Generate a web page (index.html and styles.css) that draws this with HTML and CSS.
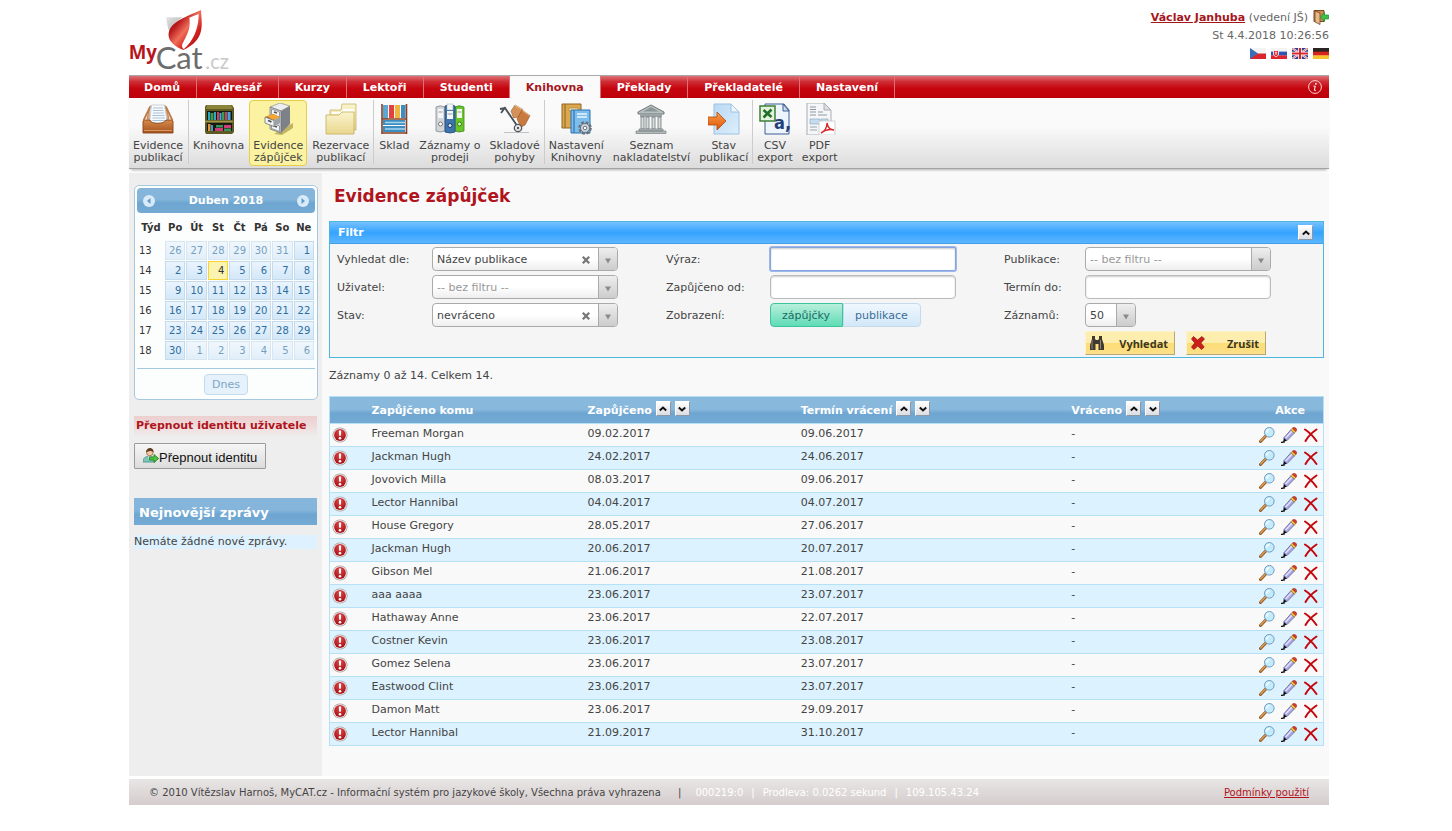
FILE: index.html
```html
<!DOCTYPE html>
<html lang="cs">
<head>
<meta charset="utf-8">
<title>MyCat.cz – Evidence zápůjček</title>
<link rel="stylesheet" href="styles.css">
</head>
<body>
<svg class="defs" aria-hidden="true">
  <defs>
    <linearGradient id="gRed" x1="0" y1="0" x2="1" y2="1"><stop offset="0" stop-color="#8e1214"/><stop offset=".3" stop-color="#b8191a"/><stop offset=".5" stop-color="#f0705c"/><stop offset=".7" stop-color="#d3201f"/><stop offset="1" stop-color="#8a0d12"/></linearGradient>
    <linearGradient id="gGrey" x1="0" y1="0" x2="1" y2="1"><stop offset="0" stop-color="#e4e4e4"/><stop offset="1" stop-color="#a8a8a8"/></linearGradient>
    <linearGradient id="gWood" x1="0" y1="0" x2="0" y2="1"><stop offset="0" stop-color="#d88a4c"/><stop offset="1" stop-color="#a3521c"/></linearGradient>
    <linearGradient id="gFolder" x1="0" y1="0" x2="0" y2="1"><stop offset="0" stop-color="#fbf4cf"/><stop offset="1" stop-color="#e9d68e"/></linearGradient>
    <linearGradient id="gSheet" x1="0" y1="0" x2="1" y2="1"><stop offset="0" stop-color="#b9d9f3"/><stop offset="1" stop-color="#dceefb"/></linearGradient>
    <linearGradient id="gOrange" x1="0" y1="0" x2="0" y2="1"><stop offset="0" stop-color="#fba04e"/><stop offset="1" stop-color="#dd5408"/></linearGradient>
    <radialGradient id="gAlert" cx=".5" cy=".3" r=".7"><stop offset="0" stop-color="#e04a4a"/><stop offset="1" stop-color="#a30d14"/></radialGradient>
  </defs>
  <symbol id="i-alert" viewBox="0 0 16 16"><circle cx="8" cy="8" r="7.6" fill="#a8a0a0"/><circle cx="8" cy="8" r="6.8" fill="#f4eeee"/><circle cx="8" cy="8" r="5.9" fill="url(#gAlert)"/><path d="M6.800 3.600h2.400l-.4 5.200H7.200z" fill="#fff"/><circle cx="8" cy="11.200" r="1.300" fill="#fff"/></symbol>
  <symbol id="i-view" viewBox="0 0 16 16"><path d="M1.5 14.5 6.5 9.2" stroke="#8b5a26" stroke-width="3" stroke-linecap="round"/><path d="M1.7 14 6.2 9.3" stroke="#e59a4e" stroke-width="1.4" stroke-linecap="round"/><circle cx="10.3" cy="5.3" r="4.8" fill="#c4ebfb" stroke="#6c9cc4"/><path d="M7.7 5.5c0-2 1.3-2.9 2.8-2.9" stroke="#fff" stroke-width="1.4" fill="none"/></symbol>
  <symbol id="i-edit" viewBox="0 0 16 16"><path d="M0 15.400c2 0 2-.6 4-.6" stroke="#111" stroke-width="1.300" fill="none"/><path d="m2.200 15 .6-4.200 3.400 2.800z" fill="#111"/><path d="M2.800 10.800 9.800 2.900l3.500 3.200-7.300 7.500z" fill="#a9a7e6" stroke="#55537e" stroke-width=".7"/><path d="m4.600 11 6.600-7" stroke="#e4e3ff" stroke-width="1.300"/><path d="m9.800 2.900 1.600-1.700 3.500 3.200-1.600 1.700z" fill="#f0c23c" stroke="#8a6a1c" stroke-width=".6"/><path d="m11.400 1.200 1-.8c1.300-.8 4 1.600 3.300 3l-.8 1z" fill="#d93a2e" stroke="#8c1f16" stroke-width=".5"/></symbol>
  <symbol id="i-del" viewBox="0 0 16 16"><path d="M2 2.500C6 5 10 9 13.500 14M13.500 2.500C9 5.500 5 9.500 2.500 14" stroke="#c3070c" stroke-width="2" fill="none" stroke-linecap="round"/></symbol>
  <symbol id="i-up" viewBox="0 0 10 10"><path d="m1.800 6.500 3.200-3 3.200 3" fill="none" stroke="#111" stroke-width="2"/></symbol>
  <symbol id="i-down" viewBox="0 0 10 10"><path d="m1.800 3.500 3.200 3 3.200-3" fill="none" stroke="#111" stroke-width="2"/></symbol>
  <symbol id="i-tri" viewBox="0 0 8 8"><path d="M1 1.500h6L4 6.500z" fill="#8a8a8a"/></symbol>
  <symbol id="i-x" viewBox="0 0 10 10"><path d="m1.800 1.800 6.400 6.400m0-6.400L1.800 8.200" stroke="#777" stroke-width="2.300"/></symbol>
</svg>
<div class="page">
  <header class="top">
    <a class="logo" href="#" aria-label="MyCat.cz">
      <svg width="104" height="63" viewBox="27 27 312 189">
        <path d="M139 52h48c-20 14-32 28-38 46-6-16-9-30-10-46z" fill="url(#gGrey)"/>
        <path d="M243 30C245 75 258 118 190 150 142 130 140 103 152 83 165 62 198 50 243 30z" fill="url(#gRed)"/>
        <path d="M236 42C236 82 222 122 191 148 186 143 185 138 187 132 198 108 214 88 208 53 218 49 227 46 236 42z" fill="#fff"/>
        <text x="26" y="178" class="logo-my">My</text>
        <text x="107" y="208" class="logo-cat">Cat</text>
        <text x="256" y="208" class="logo-cz">.cz</text>
      </svg>
    </a>
    <div class="user">
      <div class="user-line"><span><a href="#">Václav Janhuba</a> (vedení JŠ)</span>
        <button class="bare" type="button" aria-label="Odhlásit">
          <svg width="16" height="16" viewBox="0 0 16 16"><path d="M1 1.500h10v11H1z" fill="#c98b55" stroke="#7b4a22"/><path d="m2 2 5 2v11.500L2 13z" fill="#e5b98a" stroke="#7b4a22" stroke-width=".8"/><path d="M15.500 6h-4V3.500L7.500 8l4 4.500V10h4z" fill="#3fc04b" stroke="#1c8a2c" stroke-width=".7"/></svg>
        </button>
      </div>
      <div>St 4.4.2018 10:26:56</div>
      <div class="flags">
        <a href="#" aria-label="Čeština"><svg width="16" height="11" viewBox="0 0 16 11"><path fill="#f4f4f4" d="M0 0h16v6H0z"/><path fill="#d8262c" d="M0 5.500h16V11H0z"/><path fill="#3a6db5" d="m0 0 8 5.500L0 11z"/></svg></a>
        <a href="#" aria-label="Slovenčina"><svg width="16" height="11" viewBox="0 0 16 11"><path fill="#f4f4f4" d="M0 0h16v4H0z"/><path fill="#2f55b4" d="M0 3.600h16v4H0z"/><path fill="#e0242c" d="M0 7.400h16V11H0z"/><path fill="#e0242c" stroke="#fff" stroke-width=".8" d="M2.500 2.500h5V6c0 1.500-1.500 2.300-2.500 2.800C4 8.300 2.500 7.500 2.500 6z"/><path d="M5 3.500v3.500M3.800 4.800h2.400" stroke="#fff" stroke-width=".8"/></svg></a>
        <a href="#" aria-label="English"><svg width="16" height="11" viewBox="0 0 16 11"><path fill="#2b3f8c" d="M0 0h16v11H0z"/><path d="m0 0 16 11M16 0 0 11" stroke="#fff" stroke-width="2"/><path d="m0 0 16 11M16 0 0 11" stroke="#d6272e" stroke-width=".7"/><path d="M8 0v11M0 5.500h16" stroke="#fff" stroke-width="3.600"/><path d="M8 0v11M0 5.500h16" stroke="#d6272e" stroke-width="2"/></svg></a>
        <a href="#" aria-label="Deutsch"><svg width="16" height="11" viewBox="0 0 16 11"><path fill="#2a2422" d="M0 0h16v4H0z"/><path fill="#d8241c" d="M0 3.700h16v4H0z"/><path fill="#f5c52c" d="M0 7.400h16V11H0z"/></svg></a>
      </div>
    </div>
  </header>

  <nav class="nav">
    <a href="#">Domů</a><a href="#">Adresář</a><a href="#">Kurzy</a><a href="#">Lektoři</a><a href="#">Studenti</a><a href="#" class="on">Knihovna</a><a href="#">Překlady</a><a href="#">Překladatelé</a><a href="#">Nastavení</a>
    <button class="bare info" type="button" aria-label="Informace"><svg width="14" height="14" viewBox="0 0 14 14"><circle cx="7" cy="7" r="6.400" fill="none" stroke="#fbd5d5"/><circle cx="7.900" cy="3.800" r=".9" fill="#fff"/><path d="M5.500 6.200h1.800L6.300 10.300h1.600" stroke="#fff" fill="none"/></svg></button>
  </nav>

  <div class="tools">
    <div class="group">
      <a href="#"><svg viewBox="0 0 32 32"><path d="M5 16 8 3h16l3 13z" fill="#e6a66f" stroke="#b97a48" stroke-width=".8"/><path d="M8 4h14v16H8z" fill="#fdfdfd" stroke="#b9c3cc" stroke-width=".7"/><path d="M9.500 2h13l3 18h-18z" fill="#f7fafc" stroke="#b4bfc9" stroke-width=".7"/><path d="M11 5h10M11 7.500h10.500M11 10h11M10.500 12.500h12M10.500 15h12.500M10.500 17.500h13" stroke="#a9c2d9"/><path d="M2 17h6c1 4.500 14 4.500 16 0h6l1 1v12H1V18z" fill="url(#gWood)" stroke="#8a4519" stroke-width=".9"/><path d="M1.500 17.500 8 4M30.500 17.500 24 4" stroke="#bc7a45" stroke-width="1.800"/><path d="M2 27.500h28" stroke="#d99862"/></svg><span>Evidence<br>publikací</span></a>
    </div>
    <div class="group">
      <a href="#"><svg viewBox="0 0 32 32"><path d="M3 2h26l2 3v24l-2 2H3l-1-2V4z" fill="#5d5a24"/><path d="M4 2h24l2 4H3z" fill="#8b8438"/><path d="M4 8h25v9H4zm0 12h25v8H4z" fill="#171a10"/><path d="M5 9h2v8H5zm6 0h2v8h-2z" fill="#2fa7c0"/><path d="M7.500 10h3v7h-3zM19 9h2.500v8H19z" fill="#3c9a52"/><path d="M14 9h2v8h-2zm8 0h2v8h-2z" fill="#d83a5a"/><path d="M16.500 10h2v7h-2zm8-1h3v8h-3z" fill="#46a6e0"/><path d="M5 21h2.500v7H5z" fill="#e2953c"/><path d="M8 22h2v6H8z" fill="#3a9dc8"/><path d="M12 25h8v3h-8zm9-3h7v3h-7z" fill="#cf3d78"/><path d="M13 22h7v2.500h-7zm8 3.500h7V28h-7z" fill="#39935c"/><path d="M2 18.500h28" stroke="#a09748" stroke-width="1.500"/></svg><span>Knihovna</span></a>
      <a href="#" class="on"><svg viewBox="0 0 32 32"><path d="M12 31 31 20v5l-11 7z" fill="#a89a48" opacity=".7"/><path d="m8 4 10-4 10 3-9 5z" fill="#eceeef" stroke="#7d8286" stroke-width=".6"/><path d="m19 8 9-5v18l-9 9z" fill="#7c8288"/><path d="M8 4 19 8v22L8 26z" fill="#d4d7da" stroke="#6b7075" stroke-width=".7"/><path d="m9.500 6 8 3v5.500l-8-3zM9.500 20l8 3v5.500l-8-3z" fill="#f3f4f5" stroke="#7f858a" stroke-width=".8"/><path d="m12 9 3 1m-3 13 3 1" stroke="#555" stroke-width="1.400"/><path d="m3 14 8-3 7 3-8 4z" fill="#a9741f"/><path d="m5 13 7-2 6 3-7 3z" fill="#f6a638"/><path d="m3 14 9 3.500v6L3 20z" fill="#f3f4f5" stroke="#6d7276" stroke-width=".8"/><path d="m12 17.500 6-3v5.500l-6 3.500z" fill="#9ba1a6"/><path d="m6 17.500 3.500 1.300" stroke="#555" stroke-width="1.800"/></svg><span>Evidence<br>zápůjček</span></a>
      <a href="#"><svg viewBox="0 0 32 32"><path d="M17 1h14v26H5V7h11z" fill="url(#gFolder)" stroke="#c8b568" stroke-width=".8"/><path d="M7 9h9l2-3h11v5H7z" fill="#fff"/><path d="M1 12h13l3-3h12v22H1z" fill="url(#gFolder)" stroke="#c9b464" stroke-width=".9"/></svg><span>Rezervace<br>publikací</span></a>
    </div>
    <div class="group">
      <a href="#"><svg viewBox="0 0 32 32"><path d="M5 2h5v14H5z" fill="#5aa7d2"/><path d="M11 2h5v13h-5z" fill="#e3413f"/><path d="M17 2h5v13h-5z" fill="#f2b43a"/><path d="M23 2h4.500v13H23z" fill="#3c8dc0"/><path d="M5 17h22v5H5zm0 6h22v6H5z" fill="#3c8dc0"/><path d="M7 19.500h20M7 26h20" stroke="#a8d5ee" stroke-width="1.600"/><path d="M4 1v30M28.500 1v30M4 16h24.500M4 30h24.500" stroke="#8a3f22" stroke-width="1.600" fill="none"/></svg><span>Sklad</span></a>
      <a href="#"><svg viewBox="0 0 32 32"><path d="M2 4q4-2.500 9 0v24q-5 2-9 0z" fill="#d3d6d8" stroke="#85898c" stroke-width=".8"/><path d="M21 4q4-2.500 9 0v24q-5 2-9 0z" fill="#69c52c" stroke="#3e8a16" stroke-width=".8"/><path d="M11 3q5-2.500 10 0v26q-5 2-10 0z" fill="#3d74b0" stroke="#23497a" stroke-width=".8"/><path d="M13 1h6v6h-6z" fill="#f4f6f8" stroke="#9aa" stroke-width=".5"/><path d="M4 6h5v9H4zm9 2h6v8h-6zm10-2h5v9h-5z" fill="#f5f7f7"/><path d="M4.500 9h4m5 2h5m5-2h4" stroke="#999"/><circle cx="6.500" cy="21" r="2" fill="#fff" stroke="#777"/><circle cx="16" cy="22.500" r="2" fill="#dce9f5" stroke="#183a63"/><circle cx="25.500" cy="21" r="2" fill="#d9f5c8" stroke="#377d12"/></svg><span>Záznamy o<br>prodeji</span></a>
      <a href="#"><svg viewBox="0 0 32 32"><path d="M5 29.500h25" stroke="#c2c2c2"/><path d="m1 6 5-1 13 19M2 10l4.500-6" stroke="#4a5055" stroke-width="1.800" fill="none"/><path d="m12 8 4-6 8 4.500-4.500 7.500-5 1z" fill="#d59258" stroke="#9c5f2d" stroke-width=".6"/><path d="m18 16 5-9 8 5.500-5 9.500-4 2z" fill="#c97a3f" stroke="#915122" stroke-width=".6"/><path d="m16 2.500 7.500 4M23.500 7.500l7 5" stroke="#f0c497" stroke-width="1" fill="none"/><circle cx="19" cy="25" r="4.300" fill="#53585c"/><circle cx="19" cy="25" r="3" fill="#e8eaeb"/><circle cx="19" cy="25" r="1.200" fill="#555"/></svg><span>Skladové<br>pohyby</span></a>
    </div>
    <div class="group">
      <a href="#"><svg viewBox="0 0 32 32"><path d="M2 1h19v24H2z" fill="#dba84e" stroke="#8f6520"/><path d="M5 1v24" stroke="#a8782c" stroke-width="1.500"/><path d="M9 5h9v3H9z" fill="#f7e2ae" stroke="#a77a32" stroke-width=".6"/><path d="M11 7h19v23H11z" fill="#7cbdec" stroke="#2c70ad"/><path d="M14 7v23" stroke="#3b83c0" stroke-width="1.500"/><path d="M17 11h10m-10 3h10" stroke="#e9f5fd" stroke-width="1.500"/><circle cx="25" cy="25" r="5.300" fill="none" stroke="#697078" stroke-width="3" stroke-dasharray="2.500 1.660"/><circle cx="25" cy="25" r="4.500" fill="#cdd7df" stroke="#697078"/><circle cx="25" cy="25" r="1.800" fill="#fff" stroke="#697078"/></svg><span>Nastavení<br>Knihovny</span></a>
      <a href="#"><svg viewBox="0 0 32 32"><path d="M3 9 16 2l13 7v2H3z" fill="#b7bfc0" stroke="#6f7879"/><path d="M8 8.500 16 4l8 4.500z" fill="#8d9798"/><path d="M5 11h22v3H5z" fill="#9ba5a5"/><path d="M6 14h3v12H6zm5 0h3v12h-3zm6 0h3v12h-3zm6 0h3v12h-3z" fill="#d8dedd" stroke="#6f7879" stroke-width=".8"/><path d="M4 26h24v2H4zm-3 2h30v2.500H1z" fill="#b4bcbc" stroke="#7a8384" stroke-width=".7"/></svg><span>Seznam<br>nakladatelství</span></a>
      <a href="#"><svg viewBox="0 0 32 32"><path d="M6 1h17l8 8v22H6z" fill="url(#gSheet)" stroke="#9dc1e0"/><path d="m23 1 8 8h-8z" fill="#f1f8fd" stroke="#9dc1e0"/><path d="M0 14h9V9l9 9-9 9v-5H0z" fill="url(#gOrange)" stroke="#b9470a" stroke-width=".8"/></svg><span>Stav<br>publikací</span></a>
    </div>
    <div class="group">
      <a href="#"><svg viewBox="0 0 32 32"><path d="M6 1h19l5 6v24H6z" fill="#eef4fb" stroke="#3b5f96"/><path d="m24 1 6 7h-6z" fill="#c9dbf0" stroke="#3b5f96"/><path d="M1 3h15v15H1z" fill="#e3f2dd" stroke="#3c8035" stroke-width="1.500"/><path d="m4.500 7 8 7M12.500 6.500l-8 8" stroke="#23702a" stroke-width="2.600"/><text x="15" y="26" class="csv-a">a,</text></svg><span>CSV<br>export</span></a>
      <a href="#"><svg viewBox="0 0 32 32"><path d="M3 0h17l7 7v25H3z" fill="#f5f6f7" stroke="#a9adb1"/><path d="m20 0 7 7h-7z" fill="#dcdfe2" stroke="#a9adb1"/><path d="M6 4h6M6 6.500h6M6 9h6m2 0h5m-5 3h9M6 12h6" stroke="#8f98a0"/><path d="M6 16h10v5H6zm11 0h7v5h-7z" fill="#c5dcef" stroke="#8fa9bf" stroke-width=".7"/><path d="M6 24h7m-7 3h7" stroke="#9aa3aa"/><path d="M15 18h16v14H15z" fill="#fff" stroke="#c3c5c7" stroke-width=".8"/><path d="M17 30c4-2 6-6 6-10 1 5 3 7 7 7-4-1-9 0-13 3z" fill="none" stroke="#d9282c" stroke-width="1.400"/></svg><span>PDF<br>export</span></a>
    </div>
  </div>

  <div class="body">
    <aside class="side">
      <section class="cal">
        <div class="cal-head">
          <button class="bare" type="button" aria-label="Předchozí"><svg width="12" height="12" viewBox="0 0 12 12"><circle cx="6" cy="6" r="6" fill="#d9ebf8"/><path d="M7.500 3 4 6l3.500 3z" fill="#5c9ccc"/></svg></button>
          <strong>Duben 2018</strong>
          <button class="bare" type="button" aria-label="Další"><svg width="12" height="12" viewBox="0 0 12 12"><circle cx="6" cy="6" r="6" fill="#d9ebf8"/><path d="M4.500 3 8 6 4.500 9z" fill="#5c9ccc"/></svg></button>
        </div>
        <table>
          <thead><tr><th class="wk">Týd</th><th>Po</th><th>Út</th><th>St</th><th>Čt</th><th>Pá</th><th>So</th><th>Ne</th></tr></thead>
          <tbody>
            <tr><td class="wk">13</td><td class="o"><a href="#">26</a></td><td class="o"><a href="#">27</a></td><td class="o"><a href="#">28</a></td><td class="o"><a href="#">29</a></td><td class="o"><a href="#">30</a></td><td class="o"><a href="#">31</a></td><td><a href="#">1</a></td></tr>
            <tr><td class="wk">14</td><td><a href="#">2</a></td><td><a href="#">3</a></td><td class="today"><a href="#">4</a></td><td><a href="#">5</a></td><td><a href="#">6</a></td><td><a href="#">7</a></td><td><a href="#">8</a></td></tr>
            <tr><td class="wk">15</td><td><a href="#">9</a></td><td><a href="#">10</a></td><td><a href="#">11</a></td><td><a href="#">12</a></td><td><a href="#">13</a></td><td><a href="#">14</a></td><td><a href="#">15</a></td></tr>
            <tr><td class="wk">16</td><td><a href="#">16</a></td><td><a href="#">17</a></td><td><a href="#">18</a></td><td><a href="#">19</a></td><td><a href="#">20</a></td><td><a href="#">21</a></td><td><a href="#">22</a></td></tr>
            <tr><td class="wk">17</td><td><a href="#">23</a></td><td><a href="#">24</a></td><td><a href="#">25</a></td><td><a href="#">26</a></td><td><a href="#">27</a></td><td><a href="#">28</a></td><td><a href="#">29</a></td></tr>
            <tr><td class="wk">18</td><td><a href="#">30</a></td><td class="o"><a href="#">1</a></td><td class="o"><a href="#">2</a></td><td class="o"><a href="#">3</a></td><td class="o"><a href="#">4</a></td><td class="o"><a href="#">5</a></td><td class="o"><a href="#">6</a></td></tr>
          </tbody>
        </table>
        <div class="cal-foot"><button type="button">Dnes</button></div>
      </section>
      <h3 class="switch-title">Přepnout identitu uživatele</h3>
      <button class="switch" type="button"><svg width="16" height="16" viewBox="0 0 16 16"><path d="M0 14c0-4 2-5.500 6-5.500s6 1.500 6 5.500z" fill="#7fc6b8" stroke="#3f8c84" stroke-width=".8"/><path d="M5 8.500h3L6.500 12z" fill="#fff"/><circle cx="6.800" cy="4.500" r="3.300" fill="#f4c9a0" stroke="#8c5a30" stroke-width=".7"/><path d="M3 4.500c0-6 8-6 7.600 0-2-2-5-2-7.600 0z" fill="#5f3d20"/><path d="M6.500 9H11V6.500l4.700 4-4.700 4V12H6.500z" fill="#4bc23f" stroke="#1f7f1f" stroke-width=".8"/></svg><span>Přepnout identitu</span></button>
      <h2 class="news-title">Nejnovější zprávy</h2>
      <p class="news">Nemáte žádné nové zprávy.</p>
    </aside>

    <main class="main">
      <h1>Evidence zápůjček</h1>
      <form class="filter">
        <div class="filter-head"><strong>Filtr</strong><button class="sq" type="button" aria-label="Sbalit filtr"><svg width="10" height="10"><use href="#i-up"/></svg></button></div>
        <div class="filter-body">
          <div class="fcol first">
            <label for="f1">Vyhledat dle:</label>
            <div class="sel"><select id="f1"><option>Název publikace</option></select><button class="bare clr" type="button" aria-label="Vymazat"><svg width="10" height="10"><use href="#i-x"/></svg></button><span class="arr"><svg width="8" height="8"><use href="#i-tri"/></svg></span></div>
            <label for="f2">Uživatel:</label>
            <div class="sel empty"><select id="f2"><option>-- bez filtru --</option></select><span class="arr"><svg width="8" height="8"><use href="#i-tri"/></svg></span></div>
            <label for="f3">Stav:</label>
            <div class="sel"><select id="f3"><option>nevráceno</option></select><button class="bare clr" type="button" aria-label="Vymazat"><svg width="10" height="10"><use href="#i-x"/></svg></button><span class="arr"><svg width="8" height="8"><use href="#i-tri"/></svg></span></div>
          </div>
          <div class="fcol second">
            <label for="f4">Výraz:</label><input class="txt active" id="f4" type="text">
            <label for="f5">Zapůjčeno od:</label><input class="txt" id="f5" type="text">
            <span>Zobrazení:</span>
            <div class="toggle" role="radiogroup" aria-label="Zobrazení"><input type="radio" name="view" id="v1" checked><label for="v1">zápůjčky</label><input type="radio" name="view" id="v2"><label for="v2">publikace</label></div>
          </div>
          <div class="fcol third">
            <label for="f6">Publikace:</label>
            <div class="sel empty"><select id="f6"><option>-- bez filtru --</option></select><span class="arr"><svg width="8" height="8"><use href="#i-tri"/></svg></span></div>
            <label for="f7">Termín do:</label><input class="txt" id="f7" type="text">
            <label for="f8">Záznamů:</label>
            <div class="sel small"><select id="f8"><option>50</option></select><span class="arr"><svg width="8" height="8"><use href="#i-tri"/></svg></span></div>
            <div class="acts">
              <button type="submit"><svg width="16" height="16" viewBox="0 0 16 16"><path d="M3 1h3v3l1 1h2l1-1V1h3v3l2 6v5H9.500V9h-3v6H1v-5l2-6z" fill="#403a30"/><path d="M3 5v9M11.500 5v9" stroke="#8f8878"/></svg><span>Vyhledat</span></button>
              <button type="reset"><svg width="16" height="16" viewBox="0 0 16 16"><path d="m3.500 1.500 4 3.500 4.500-3.500L14.500 4 10.800 8l3.400 4-2.700 2.500L7.800 11l-4 3.500L1.500 12l3.300-4L1.500 4z" fill="#cc1f1a" stroke="#8c0f0d" stroke-width=".7"/></svg><span>Zrušit</span></button>
            </div>
          </div>
        </div>
      </form>
      <p class="count">Záznamy 0 až 14. Celkem 14.</p>
      <table class="grid">
        <colgroup><col class="c1"><col class="c2"><col class="c3"><col class="c4"><col class="c5"><col class="c6"></colgroup>
        <thead><tr>
          <th></th><th><div class="th"><span>Zapůjčeno komu</span></div></th>
          <th><div class="th"><span>Zapůjčeno</span><button class="sq" type="button" aria-label="Vzestupně"><svg width="10" height="10"><use href="#i-up"/></svg></button><button class="sq" type="button" aria-label="Sestupně"><svg width="10" height="10"><use href="#i-down"/></svg></button></div></th>
          <th><div class="th"><span>Termín vrácení</span><button class="sq" type="button" aria-label="Vzestupně"><svg width="10" height="10"><use href="#i-up"/></svg></button><button class="sq" type="button" aria-label="Sestupně"><svg width="10" height="10"><use href="#i-down"/></svg></button></div></th>
          <th><div class="th"><span>Vráceno</span><button class="sq" type="button" aria-label="Vzestupně"><svg width="10" height="10"><use href="#i-up"/></svg></button><button class="sq" type="button" aria-label="Sestupně"><svg width="10" height="10"><use href="#i-down"/></svg></button></div></th>
          <th><div class="th end"><span>Akce</span></div></th>
        </tr></thead>
        <tbody id="rows"></tbody>
      </table>
    </main>
  </div>

  <footer class="foot">
    <div>© 2010 Vítězslav Harnoš, MyCAT.cz - Informační systém pro jazykové školy, Všechna práva vyhrazena <span class="sep">|</span><span class="pale">000219:0<span class="bar">|</span>Prodleva: 0.0262 sekund<span class="bar">|</span>109.105.43.24</span></div>
    <a href="#">Podmínky použití</a>
  </footer>
</div>
<script src="app.js"></script>
</body>
</html>
```
FILE: styles.css
```css
* { box-sizing: border-box; }
body { margin: 0; padding-left: 6px; background: #fff; color: #444; font: 11px/14px "DejaVu Sans", Verdana, sans-serif; }
button, input, select { font: inherit; color: inherit; margin: 0; }
button { cursor: pointer; }
h1, h2, h3, p { margin: 0; }
svg { display: block; flex: none; }
.defs { position: absolute; width: 0; height: 0; }
.page { max-width: 1200px; margin: 0 auto; }
.bare { padding: 0; border: 0; background: none; }

.top { display: flex; justify-content: space-between; padding: 9px 0 3px; }
.logo svg { overflow: visible; }
.logo-my { font: bold 56px "Open Sans", sans-serif; fill: #b8161c; }
.logo-cat { font: 93px Lato, sans-serif; fill: #6d6d6d; }
.logo-cz { font: 61px Lato, sans-serif; fill: #c9c9c9; }
.user { display: flex; flex-direction: column; align-items: flex-end; gap: 4px; color: #666; }
.user-line { display: flex; align-items: center; gap: 5px; height: 16px; }
.user-line span { padding-top: 1px; }
.user a { color: #a5161c; font-weight: bold; }
.flags { display: flex; gap: 5px; padding-top: 1px; }

.nav { display: flex; height: 23px; border-top: 1px solid #a8a8a8; background: linear-gradient(#dd7378, #cf2f37 25%, #c6060f 55%, #bd000a); }
.nav a { padding: 5px 16px 3px 15px; color: #fff; font-weight: bold; text-decoration: none; border-right: 1px solid #dc6f74; border-left: 1px solid transparent; background-clip: padding-box; }
.nav a:first-child { border-left: 0; }
.nav a.on { background: #fafafa; color: #a5161c; }
.info { margin-left: auto; margin-right: 7px; }

.tools { position: relative; display: flex; height: 71px; padding-top: 2px; background: linear-gradient(#fafafa 40%, #dcdcdc); border-bottom: 1px solid #a2a2a2; box-shadow: 0 3px 3px -2px #aaa; }
.group { display: flex; gap: 1px; margin-bottom: 4px; border-right: 1px solid #ccc; }
.group:first-child { padding-right: 1px; }
.group:last-child { border-right: 0; }
.tools a { display: flex; flex-direction: column; align-items: center; gap: 5px; height: 66px; padding: 2px 3px; border: 1px solid transparent; border-radius: 4px; color: #444; line-height: 12px; text-align: center; text-decoration: none; }
.tools a.on { background: #fbf2a2; border-color: #e8cd48; }
.tools svg { width: 32px; height: 32px; }
.csv-a { font: bold 18px "DejaVu Sans Condensed", sans-serif; fill: #243f78; }

.body { display: flex; min-height: 603px; margin-top: 4px; background: #f9f9f9; }
.side { flex: none; width: 193px; padding: 12px 5px 0; background: #eee; }
.cal { width: 184px; padding: 2px; border: 1px solid #a6c9e2; border-radius: 5px; background: #fcfdfd; color: #333; }
.cal-head { display: flex; justify-content: space-between; align-items: center; height: 25px; padding: 0 6px; border-radius: 4px; background: linear-gradient(#85b5da 45%, #6ea6d1 60%, #74aad4); color: #fff; }
.cal table { width: 100%; margin: 2px 0 7px; border-collapse: separate; border-spacing: 1px; table-layout: fixed; }
.cal th { height: 24px; padding: 0; font-size: 10px; }
.cal th.wk { width: 26px; }
.cal td { padding: 0; font-size: 10px; }
.cal td.wk { padding-left: 1px; }
.cal td a { display: block; height: 19px; padding: 2px 3px; border: 1px solid #c5dbec; background: linear-gradient(#eaf4fd, #d3e8f9); color: #2e6e9e; text-align: right; text-decoration: none; }
.cal td.o a { opacity: .65; }
.cal td.today a { border-color: #fad42e; background: #fbf3b0; color: #363636; }
.cal-foot { padding: 5px 0 2px; border-top: 1px solid #a6c9e2; text-align: center; }
.cal-foot button { height: 21px; padding: 0 7px; border: 1px solid #c5dbec; border-radius: 4px; background: #e5f1fb; color: #7fa5c3; }
.switch-title { width: 183px; margin-top: 16px; padding: 3px 2px 4px; background: linear-gradient(#eccfcf, #efdcdc 50%, #eee); color: #b0141c; font-size: 11px; white-space: nowrap; }
.switch { display: flex; align-items: center; height: 26px; margin-top: 6px; padding: 0 8px; border: 1px solid #9a9a9a; border-radius: 1px; background: linear-gradient(#f6f6f6, #dcdcdc); color: #111; font: 13px "Liberation Sans", Arial, sans-serif; white-space: nowrap; }
.switch span { padding-top: 2px; }
.news-title { width: 183px; margin-top: 29px; padding: 7px 5px 4px; background: linear-gradient(#85b5da 45%, #6ea6d1 60%, #74aad4); color: #fff; font-size: 13px; line-height: 16px; }
.news { width: 183px; margin-top: 10px; background: #ddf2fe; white-space: nowrap; }

.main { flex: 1; min-width: 0; padding: 13px 5px 30px 7px; }
h1 { padding: 0 5px; color: #b0141c; font-size: 17px; line-height: 20px; }
.filter { margin-top: 15px; border: 1px solid #4ab7dd; background: #f5f5f5; }
.filter-head { display: flex; justify-content: space-between; align-items: center; height: 22px; padding: 0 10px 0 8px; background: linear-gradient(#76c0ff, #35a3ff 50%, #5cb5ff); border-bottom: 1px solid #3f9fe8; color: #fff; }
.sq { display: flex; align-items: center; justify-content: center; width: 15px; height: 15px; padding: 0; border: 1px solid; border-color: #fff #8b98a6 #8b98a6 #fff; background: linear-gradient(#fff, #dcdde2); }
.filter-body { display: grid; grid-template-columns: 329fr 338fr 319fr; padding: 3px 0 2px 7px; color: #444; }
.fcol { display: grid; align-content: start; align-items: center; grid-auto-rows: 24px; row-gap: 4px; }
.fcol > label, .fcol > span { padding-top: 1px; }
.first { grid-template-columns: 95px 186px; }
.second { grid-template-columns: 104px 186px; }
.third { grid-template-columns: 81px 186px; }
.sel { position: relative; display: flex; height: 24px; border: 1px solid #aaa; border-radius: 4px; background: linear-gradient(#fff 50%, #eee); overflow: hidden; }
.sel select { flex: 1; appearance: none; padding: 1px 4px 0; border: 0; background: none; }
.sel.empty select { color: #999; }
.sel.small { width: 51px; }
.clr { position: absolute; right: 26px; top: 7px; }
.arr { position: absolute; right: 0; top: 0; bottom: 0; width: 19px; display: flex; align-items: center; justify-content: center; padding-top: 3px; border-left: 1px solid #aaa; background: linear-gradient(#eee, #ccc); pointer-events: none; }
.txt { width: 100%; height: 24px; padding: 0 4px; border: 1px solid #bbb; border-radius: 4px; background: #fff; box-shadow: inset 0 1px 2px #ccc; }
.txt.active { border-color: #86a4e0; border-radius: 2px; box-shadow: 0 0 0 1px #9fb8ea, inset 0 1px 2px #ccc; }
.toggle { display: flex; height: 24px; }
.toggle input { position: absolute; opacity: 0; pointer-events: none; }
.toggle label { padding: 5px 12px 3px 11px; border: 1px solid #c5dbec; background: linear-gradient(#eff7fe, #d3e7f8); color: #3a6f98; }
.toggle input:first-child + label { border-radius: 4px 0 0 4px; }
.toggle label:last-child { border-radius: 0 4px 4px 0; }
.toggle input:checked + label { border-color: #3cc49c; background: linear-gradient(#b8efdc, #5fdcb5); color: #1c6a66; }
.acts { grid-column: 2; display: flex; gap: 11px; }
.acts button { display: flex; align-items: center; justify-content: space-between; height: 24px; padding: 0 6px 0 3px; border: 1px solid; border-color: #fdf3c8 #b5a878 #b5a878 #fdf3c8; background: linear-gradient(#fdeeb0 50%, #fddc74 50%, #fce08a); color: #3c3820; font: bold 11px "Noto Sans", sans-serif; }
.acts button:first-child { width: 90px; }
.acts button:last-child { width: 80px; }
.count { margin: 11px 0 13px; }

.grid { width: 100%; table-layout: fixed; border-collapse: collapse; border: 1px solid #b5e0f5; }
.c1 { width: 38px; } .c2 { width: 22.6%; } .c3 { width: 22.3%; } .c4 { width: 28.3%; } .c5 { width: 19.7%; } .c6 { width: 7.1%; }
.grid thead tr { background: linear-gradient(#88b8dc 45%, #6ea6d1 60%, #74aad4); }
.grid th { height: 27px; padding: 0 4px; color: #fff; text-align: left; white-space: nowrap; }
.th { display: flex; align-items: center; gap: 4px; height: 18px; padding-bottom: 3px; }
.th.end { justify-content: flex-end; padding-right: 14px; }
.th span { padding-top: 4px; }
.grid td { height: 23px; padding: 0 4px 2px; border-top: 1px solid #b5e0f5; }
.grid td:first-child, .grid td:last-child { padding: 0 2px 1px; }
.grid tbody tr:nth-child(even) { background: #dcf2fe; }
.acticons { display: flex; justify-content: flex-end; gap: 6px; padding-right: 2px; }

.foot { display: flex; justify-content: space-between; align-items: center; height: 26px; margin-top: 3px; padding: 1px 20px 0; background: linear-gradient(#e8e6e6, #d5cccc); box-shadow: 0 1px #fff, 0 2px #b0a6a6; font-size: 10px; white-space: nowrap; }
.foot .sep { margin: 0 14px; }
.foot .bar { margin: 0 8px; }
.pale { color: #fff; }
.foot a { color: #b0141c; }
```
FILE: app.js
```js
const loans = [
  ["Freeman Morgan", "09.02.2017", "09.06.2017"],
  ["Jackman Hugh", "24.02.2017", "24.06.2017"],
  ["Jovovich Milla", "08.03.2017", "09.06.2017"],
  ["Lector Hannibal", "04.04.2017", "04.07.2017"],
  ["House Gregory", "28.05.2017", "27.06.2017"],
  ["Jackman Hugh", "20.06.2017", "20.07.2017"],
  ["Gibson Mel", "21.06.2017", "21.08.2017"],
  ["aaa aaaa", "23.06.2017", "23.07.2017"],
  ["Hathaway Anne", "23.06.2017", "22.07.2017"],
  ["Costner Kevin", "23.06.2017", "23.08.2017"],
  ["Gomez Selena", "23.06.2017", "23.07.2017"],
  ["Eastwood Clint", "23.06.2017", "23.07.2017"],
  ["Damon Matt", "23.06.2017", "29.09.2017"],
  ["Lector Hannibal", "21.09.2017", "31.10.2017"],
];
const icon = (name) => `<svg width="16" height="16"><use href="#i-${name}"/></svg>`;
const action = (name, label) => `<button class="bare" type="button" aria-label="${label}">${icon(name)}</button>`;
document.getElementById("rows").innerHTML = loans.map(([who, from, due]) => `
  <tr><td>${icon("alert")}</td><td>${who}</td><td>${from}</td><td>${due}</td><td>-</td>
  <td><div class="acticons">${action("view", "Zobrazit")}${action("edit", "Upravit")}${action("del", "Smazat")}</div></td></tr>`).join("");
```
